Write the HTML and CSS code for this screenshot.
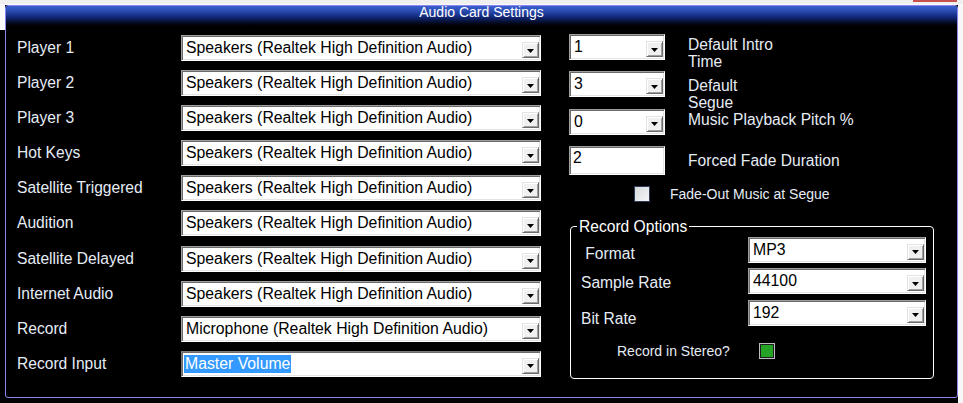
FILE: index.html
```html
<!DOCTYPE html>
<html>
<head>
<meta charset="utf-8">
<link rel="stylesheet" href="styles.css">
</head>
<body>
<div class="screen">
  <div class="topbar"><span class="close-edge"></span></div>
  <div class="main">
    <div class="edge-l"></div>
    <section class="panel">
      <header class="title">Audio Card Settings</header>
      <div class="body">
        <div class="devices">
          <div class="lbl">Player 1</div>
          <div class="combo wide"><span class="val">Speakers (Realtek High Definition Audio)</span><span class="btn"><svg width="7" height="4" viewBox="0 0 7 4"><polygon points="0,0 7,0 3.5,4" fill="#000"/></svg></span></div>
          <div class="lbl">Player 2</div>
          <div class="combo wide"><span class="val">Speakers (Realtek High Definition Audio)</span><span class="btn"><svg width="7" height="4" viewBox="0 0 7 4"><polygon points="0,0 7,0 3.5,4" fill="#000"/></svg></span></div>
          <div class="lbl">Player 3</div>
          <div class="combo wide"><span class="val">Speakers (Realtek High Definition Audio)</span><span class="btn"><svg width="7" height="4" viewBox="0 0 7 4"><polygon points="0,0 7,0 3.5,4" fill="#000"/></svg></span></div>
          <div class="lbl">Hot Keys</div>
          <div class="combo wide"><span class="val">Speakers (Realtek High Definition Audio)</span><span class="btn"><svg width="7" height="4" viewBox="0 0 7 4"><polygon points="0,0 7,0 3.5,4" fill="#000"/></svg></span></div>
          <div class="lbl">Satellite Triggered</div>
          <div class="combo wide"><span class="val">Speakers (Realtek High Definition Audio)</span><span class="btn"><svg width="7" height="4" viewBox="0 0 7 4"><polygon points="0,0 7,0 3.5,4" fill="#000"/></svg></span></div>
          <div class="lbl">Audition</div>
          <div class="combo wide"><span class="val">Speakers (Realtek High Definition Audio)</span><span class="btn"><svg width="7" height="4" viewBox="0 0 7 4"><polygon points="0,0 7,0 3.5,4" fill="#000"/></svg></span></div>
          <div class="lbl">Satellite Delayed</div>
          <div class="combo wide"><span class="val">Speakers (Realtek High Definition Audio)</span><span class="btn"><svg width="7" height="4" viewBox="0 0 7 4"><polygon points="0,0 7,0 3.5,4" fill="#000"/></svg></span></div>
          <div class="lbl">Internet Audio</div>
          <div class="combo wide"><span class="val">Speakers (Realtek High Definition Audio)</span><span class="btn"><svg width="7" height="4" viewBox="0 0 7 4"><polygon points="0,0 7,0 3.5,4" fill="#000"/></svg></span></div>
          <div class="lbl">Record</div>
          <div class="combo wide"><span class="val">Microphone (Realtek High Definition Audio)</span><span class="btn"><svg width="7" height="4" viewBox="0 0 7 4"><polygon points="0,0 7,0 3.5,4" fill="#000"/></svg></span></div>
          <div class="lbl">Record Input</div>
          <div class="combo wide focus"><span class="val"><span class="sel">Master Volume</span></span><span class="btn"><svg width="7" height="4" viewBox="0 0 7 4"><polygon points="0,0 7,0 3.5,4" fill="#000"/></svg></span></div>
        </div>

        <div class="side">
          <div class="opts">
            <div class="combo small"><span class="val">1</span><span class="btn"><svg width="7" height="4" viewBox="0 0 7 4"><polygon points="0,0 7,0 3.5,4" fill="#000"/></svg></span></div>
            <div class="rlabel off2">Default Intro<br>Time</div>
            <div class="combo small"><span class="val">3</span><span class="btn"><svg width="7" height="4" viewBox="0 0 7 4"><polygon points="0,0 7,0 3.5,4" fill="#000"/></svg></span></div>
            <div class="rlabel off6">Default<br>Segue</div>
            <div class="combo small"><span class="val">0</span><span class="btn"><svg width="7" height="4" viewBox="0 0 7 4"><polygon points="0,0 7,0 3.5,4" fill="#000"/></svg></span></div>
            <div class="rlabel off2">Music Playback Pitch %</div>
            <div class="textbox">2</div>
            <div class="rlabel mid">Forced Fade Duration</div>
          </div>

          <div class="check-row">
            <span class="check"></span>
            <span class="small-lbl">Fade-Out Music at Segue</span>
          </div>

          <fieldset class="record">
            <legend>Record Options</legend>
            <div class="rec-inner">
              <div class="rec-grid">
                <div class="flabel p8">&nbsp;Format</div>
                <div class="combo rec"><span class="val">MP3</span><span class="btn"><svg width="7" height="4" viewBox="0 0 7 4"><polygon points="0,0 7,0 3.5,4" fill="#000"/></svg></span></div>
                <div class="flabel p6">Sample Rate</div>
                <div class="combo rec"><span class="val">44100</span><span class="btn"><svg width="7" height="4" viewBox="0 0 7 4"><polygon points="0,0 7,0 3.5,4" fill="#000"/></svg></span></div>
                <div class="flabel p10">Bit Rate</div>
                <div class="combo rec"><span class="val">192</span><span class="btn"><svg width="7" height="4" viewBox="0 0 7 4"><polygon points="0,0 7,0 3.5,4" fill="#000"/></svg></span></div>
              </div>
              <div class="stereo">
                <span class="small-lbl">Record in Stereo?</span>
                <span class="check green"></span>
              </div>
            </div>
          </fieldset>
        </div>
      </div>
    </section>
    <div class="edge-r"></div>
  </div>
</div>
</body>
</html>
```

FILE: styles.css
```css
* { box-sizing: border-box; }

html, body {
  margin: 0;
  padding: 0;
  background: #000;
}

body {
  font-family: "Liberation Sans", Arial, sans-serif;
  width: 963px;
  height: 403px;
  overflow: hidden;
}

.screen {
  display: flex;
  flex-direction: column;
  width: 963px;
  height: 403px;
}

.topbar {
  height: 5px;
  flex: none;
  display: flex;
  background: linear-gradient(#f0f0f0 0 4px, #fbfbfb 4px);
  overflow: hidden;
}

.close-edge {
  margin-left: auto;
  margin-right: 6px;
  width: 44px;
  height: 2px;
  background: #c75050;
}

.main {
  flex: 1;
  display: flex;
}

.edge-l {
  width: 5px;
  flex: none;
  height: 393px;
  background: linear-gradient(#fafafa 0 25px, #000 25px);
}

.edge-r {
  width: 5px;
  flex: none;
  background: #f7f7f7;
}

.panel {
  width: 953px;
  height: 393px;
  flex: none;
  border: 1px solid #8a86f0;
  border-radius: 3px;
  background: #000;
  display: flex;
  flex-direction: column;
}

.title {
  height: 20px;
  flex: none;
  line-height: 12px;
  text-align: center;
  color: #fff;
  font-size: 14px;
  background: linear-gradient(#3a60d0 0%, #2a4cb0 25%, #12287a 55%, #040a20 85%, #000 100%);
  border-radius: 2px 2px 0 0;
}

.body {
  flex: 1;
  display: flex;
  align-items: flex-start;
}

/* left device list */
.devices {
  display: grid;
  grid-template-columns: 164px 360px;
  grid-auto-rows: 26px;
  row-gap: 9.1px;
  align-items: center;
  padding: 9px 0 0 11px;
}

.lbl {
  font-size: 15.6px;
  color: #e6ecf6;
  white-space: nowrap;
}

/* combo boxes */
.combo {
  height: 26px;
  display: flex;
  align-items: center;
  background: #fff;
  border: 1px solid;
  border-color: #a0a0a0 #fff #fff #a0a0a0;
  box-shadow: inset 1px 1px #6b6b6b, inset -1px -1px #e3e3e3;
  padding: 0 1px 0 4px;
  color: #000;
  font-size: 15.8px;
}

.combo .val {
  flex: 1;
  min-width: 0;
  white-space: nowrap;
  overflow: hidden;
  line-height: 18px;
}

.combo .btn {
  flex: none;
  align-self: flex-end;
  margin-bottom: 2px;
  width: 17px;
  height: 16px;
  background: #f0f0f0;
  border: 1px solid;
  border-color: #e3e3e3 #6b6b6b #6b6b6b #e3e3e3;
  box-shadow: inset 1px 1px #fff, inset -1px -1px #a0a0a0;
  display: flex;
  align-items: center;
  justify-content: center;
  padding-top: 1px;
}

.combo .btn svg { display: block; }

.combo.focus {
  border-color: #7a7a7a #fff #fff #7a7a7a;
  padding-left: 2px;
}

.sel {
  background: #3399ff;
  color: #fff;
  padding: 1px;
}

/* right side */
.side {
  margin-left: 28px;
  padding-top: 8px;
  width: 366px;
}

.opts {
  display: grid;
  grid-template-columns: 96px auto;
  grid-template-rows: 26px 26px 26px 29px;
  column-gap: 23px;
  row-gap: 11.3px;
}

.combo.small { width: 96px; }

.rlabel {
  height: 26px;
  font-size: 15.6px;
  line-height: 17px;
  color: #e6ecf6;
  white-space: nowrap;
}

.off2 { padding-top: 2px; }
.off6 { padding-top: 6px; }

.rlabel.mid {
  height: 29px;
  display: flex;
  align-items: center;
}

.textbox {
  width: 96px;
  height: 29px;
  background: #fff;
  border: 1px solid;
  border-color: #a0a0a0 #fff #fff #a0a0a0;
  box-shadow: inset 1px 1px #6b6b6b, inset -1px -1px #e3e3e3;
  padding: 2px 0 0 3px;
  font-size: 15.8px;
  line-height: 18px;
  color: #000;
}

.check-row {
  margin-top: 11px;
  padding-left: 65px;
  display: flex;
  align-items: center;
  gap: 20px;
  height: 16px;
}

.check {
  width: 16px;
  height: 16px;
  flex: none;
  border: 1px solid #2f3c55;
  background: linear-gradient(135deg, #d6d9de, #f6f6f6);
}

.small-lbl {
  font-size: 14px;
  color: #e6ecf6;
  white-space: nowrap;
}

.record {
  margin: 17px 0 0 1px;
  padding: 0;
  width: 364px;
  min-inline-size: 0;
  border: 1px solid #fff;
  border-radius: 4px;
}

.record legend {
  margin-left: 6px;
  padding: 0 2px;
  font-size: 15.6px;
  line-height: 16px;
  color: #fff;
}

.rec-inner {
  padding: 2px 6px 20px 10px;
}

.rec-grid {
  display: grid;
  grid-template-columns: 167px 178px;
  grid-auto-rows: 26px;
  row-gap: 5.5px;
}

.flabel {
  height: 26px;
  font-size: 15.6px;
  line-height: 18px;
  color: #e6ecf6;
  white-space: nowrap;
}

.p6 { padding-top: 6px; }
.p8 { padding-top: 8px; }
.p10 { padding-top: 10px; }

.combo.rec { width: 178px; }

.stereo {
  margin-top: 18px;
  padding-left: 36px;
  display: flex;
  align-items: center;
  gap: 30px;
  height: 14px;
}

.check.green {
  width: 14px;
  height: 14px;
  border: 1px solid #1c1c1c;
  background: #25a326;
  box-shadow: 0 0 0 1px #bdbdbd;
}
```
